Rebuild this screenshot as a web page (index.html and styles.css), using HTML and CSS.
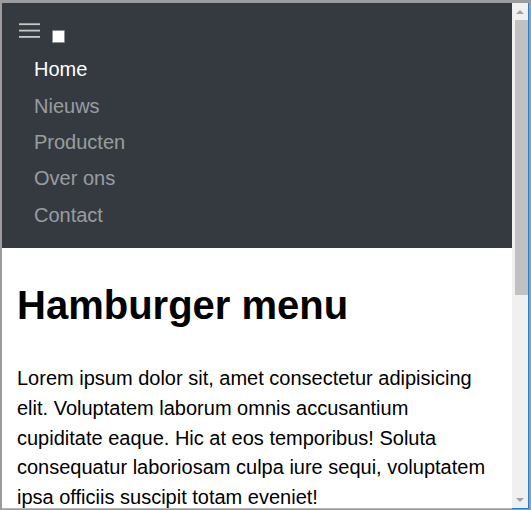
FILE: index.html
```html
<!DOCTYPE html>
<html lang="nl">
<head>
<meta charset="utf-8">
<title>Hamburger menu</title>
<link rel="stylesheet" href="styles.css">
</head>
<body>
<div class="frame">
  <div class="window">
    <div class="page">
      <nav class="navbar">
        <div class="toggler-row">
          <svg class="hamburger" width="22" height="15" viewBox="0 0 22 15" aria-hidden="true">
            <rect x="0" y="0.3" width="21" height="1.8" fill="#c6c7c9"/>
            <rect x="0" y="6.7" width="21" height="1.8" fill="#c6c7c9"/>
            <rect x="0" y="13" width="21" height="1.8" fill="#c6c7c9"/>
          </svg>
          <span class="checkbox"></span>
        </div>
        <ul class="nav-list">
          <li><a class="nav-link active" href="#">Home</a></li>
          <li><a class="nav-link" href="#">Nieuws</a></li>
          <li><a class="nav-link" href="#">Producten</a></li>
          <li><a class="nav-link" href="#">Over ons</a></li>
          <li><a class="nav-link" href="#">Contact</a></li>
        </ul>
      </nav>
      <main class="content">
        <h1 class="title">Hamburger menu</h1>
        <p class="text">Lorem ipsum dolor sit, amet consectetur adipisicing elit. Voluptatem laborum omnis accusantium cupiditate eaque. Hic at eos temporibus! Soluta consequatur laboriosam culpa iure sequi, voluptatem ipsa officiis suscipit totam eveniet!</p>
      </main>
    </div>
    <div class="scrollbar">
      <div class="arrow-up"></div>
      <div class="thumb"></div>
      <div class="arrow-down"></div>
    </div>
  </div>
</div>
</body>
</html>
```
FILE: styles.css
```css
* { box-sizing: border-box; }
html, body {
  margin: 0;
  padding: 0;
  background: #ffffff;
}
body {
  font-family: "Liberation Sans", Arial, sans-serif;
}
.frame {
  width: 531px;
  height: 510px;
  background: #9c9c9c;
  padding: 3px 2px 1px 2px;
  overflow: hidden;
}
.window {
  display: flex;
  height: 506px;
  border-right: 1px solid #1f7fd8;
  background: #ffffff;
}
.page {
  flex: 1;
  overflow: hidden;
  background: #ffffff;
  border-bottom: 1px solid #b4b4b4;
}
.navbar {
  background: #343a40;
  height: 245px;
  padding-top: 20px;
}
.toggler-row {
  display: flex;
  align-items: flex-start;
  padding-left: 17px;
  height: 20px;
}
.hamburger {
  display: block;
}
.checkbox {
  width: 13px;
  height: 13px;
  margin-left: 11px;
  margin-top: 7px;
  background: #ffffff;
  border: 1px solid #8f8f8f;
  border-radius: 1px;
}
.nav-list {
  list-style: none;
  margin: 8px 0 0 0;
  padding: 0 0 0 32px;
}
.nav-link {
  display: block;
  font-size: 20px;
  line-height: 30px;
  padding: 3.2px 0;
  color: rgba(255, 255, 255, 0.5);
  text-decoration: none;
}
.nav-link.active {
  color: #ffffff;
}
.content {
  padding: 0 15px;
}
.title {
  margin: 33px 0 0 0;
  font-size: 40px;
  line-height: 48px;
  font-weight: 700;
  color: #000000;
}
.text {
  margin: 35px 0 0 0;
  font-size: 20px;
  line-height: 29.75px;
  color: #000000;
}
.scrollbar {
  width: 16px;
  background: #f0f0f0;
  display: flex;
  flex-direction: column;
  align-items: center;
  border-bottom: 1px solid #1f7fd8;
}
.arrow-up {
  margin-top: 7px;
  width: 0;
  height: 0;
  border-left: 4px solid transparent;
  border-right: 4px solid transparent;
  border-bottom: 4px solid #a3a3a3;
}
.thumb {
  margin-top: 6px;
  width: 13px;
  height: 275px;
  background: #c1c1c1;
  align-self: flex-end;
}
.arrow-down {
  margin-top: auto;
  margin-bottom: 6px;
  width: 0;
  height: 0;
  border-left: 4px solid transparent;
  border-right: 4px solid transparent;
  border-top: 4px solid #a3a3a3;
}
```
